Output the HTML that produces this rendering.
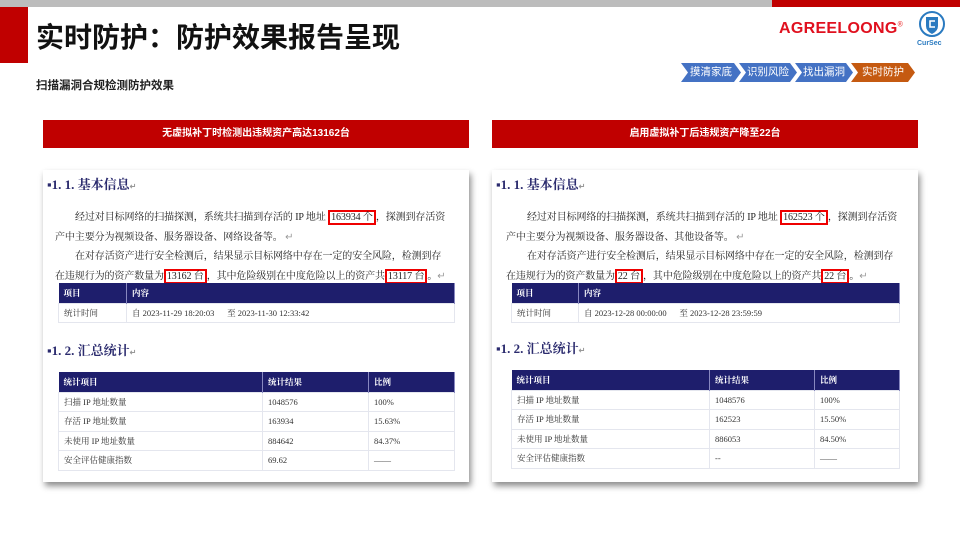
<!DOCTYPE html>
<html><head><meta charset="utf-8"><style>
*{margin:0;padding:0;box-sizing:border-box}
body{width:960px;height:540px;position:relative;overflow:hidden;background:#fff;font-family:"Liberation Sans","Noto Sans CJK SC",sans-serif}
.a{position:absolute;white-space:nowrap}
.panel{position:absolute;top:170px;width:426px;height:312px;background:#fff;box-shadow:2px 4px 6px rgba(0,0,0,.45)}
.h{position:absolute;font-family:"Liberation Serif","Noto Serif CJK SC",serif;font-weight:bold;color:#2b2b6e;font-size:13px}
.p{position:absolute;font-family:"Liberation Serif","Noto Serif CJK SC",serif;font-size:10px;color:#222;white-space:nowrap;letter-spacing:-0.1px}
.box{border:2px solid #e00;padding:0 1px}
table{position:absolute;border-collapse:collapse;font-family:"Liberation Serif","Noto Serif CJK SC",serif;font-size:8.5px;color:#333}
td{border:1px solid #e4e6ee;padding-left:5px;height:19.5px}
th{background:#1e1e6c;color:#fff;text-align:left;padding-left:5px;font-weight:bold;border-right:1px solid #8888c0;height:20px}
.ban{position:absolute;top:120px;height:28px;width:426px;background:#c00000;color:#fff;font-size:10px;font-weight:bold;text-align:center;line-height:28px}
.ar{position:absolute;top:63px;height:19px;color:#fff;font-size:10.5px;line-height:19px;text-align:center;clip-path:polygon(0 0,calc(100% - 7px) 0,100% 50%,calc(100% - 7px) 100%,0 100%,7px 50%)}
</style></head><body>
<div class="a" style="left:0;top:0;width:772px;height:7px;background:#bcbcbc"></div>
<div class="a" style="left:772px;top:0;width:188px;height:7px;background:#c00000"></div>
<div class="a" style="left:0;top:7px;width:28px;height:56px;background:#c00000"></div>
<div class="a" style="left:36px;top:16px;font-size:28px;font-weight:bold;color:#111">实时防护：防护效果报告呈现</div>
<div class="a" style="left:36px;top:77px;font-size:11.5px;font-weight:bold;color:#222">扫描漏洞合规检测防护效果</div>
<div class="a" style="left:779px;top:20px;font-size:16px;font-weight:bold;color:#e0101e;letter-spacing:.3px">AGREELOONG<sup style="font-size:7px;color:#e44">®</sup></div>
<svg class="a" style="left:918px;top:11px" width="28" height="30" viewBox="0 0 28 30"><circle cx="14" cy="13" r="12" fill="none" stroke="#2a7ac0" stroke-width="2"/><path d="M8 6h12v9q0 5-6 8q-6-3-6-8z" fill="#2a7ac0"/><path d="M17 10h-5v6h5" fill="none" stroke="#fff" stroke-width="1.6"/></svg>
<div class="a" style="left:917px;top:40px;font-size:7px;font-weight:bold;color:#2a7ac0">CurSec</div>
<div class="ar" style="left:681px;width:60px;background:#4472c4">摸清家底</div>
<div class="ar" style="left:739px;width:58px;background:#4472c4">识别风险</div>
<div class="ar" style="left:795px;width:58px;background:#4472c4">找出漏洞</div>
<div class="ar" style="left:851px;width:64px;background:#c55a11">实时防护</div>
<div class="ban" style="left:43px">无虚拟补丁时检测出违规资产高达13162台</div>
<div class="ban" style="left:492px">启用虚拟补丁后违规资产降至22台</div>

<div class="panel" style="left:43px"></div>
<div class="h" style="left:47px;top:174px">▪1. 1. 基本信息<span style="font-size:8px;color:#999">↵</span></div>
<div class="p" style="left:75px;top:208px">经过对目标网络的扫描探测，系统共扫描到存活的 IP 地址 <span class="box">163934 个</span>，探测到存活资</div>
<div class="p" style="left:55px;top:228px">产中主要分为视频设备、服务器设备、网络设备等。 <span style="color:#999">↵</span></div>
<div class="p" style="left:75px;top:247px">在对存活资产进行安全检测后，结果显示目标网络中存在一定的安全风险，检测到存</div>
<div class="p" style="left:55px;top:267px">在违规行为的资产数量为<span class="box">13162 台</span>，其中危险级别在中度危险以上的资产共<span class="box">13117 台</span>。<span style="color:#999">↵</span></div>
<table style="left:58px;top:283px;width:397px"><tr><th style="width:68px">项目</th><th>内容</th></tr><tr><td>统计时间</td><td>自 2023-11-29 18:20:03 &nbsp;&nbsp;&nbsp;&nbsp;&nbsp;至 2023-11-30 12:33:42</td></tr></table>
<div class="h" style="left:47px;top:340px">▪1. 2. 汇总统计<span style="font-size:8px;color:#999">↵</span></div>
<table style="left:58px;top:372px;width:397px"><tr><th style="width:204px">统计项目</th><th style="width:106px">统计结果</th><th>比例</th></tr>
<tr><td>扫描 IP 地址数量</td><td>1048576</td><td>100%</td></tr>
<tr><td>存活 IP 地址数量</td><td>163934</td><td>15.63%</td></tr>
<tr><td>未使用 IP 地址数量</td><td>884642</td><td>84.37%</td></tr>
<tr><td>安全评估健康指数</td><td>69.62</td><td>——</td></tr></table>

<div class="panel" style="left:492px"></div>
<div class="h" style="left:496px;top:174px">▪1. 1. 基本信息<span style="font-size:8px;color:#999">↵</span></div>
<div class="p" style="left:527px;top:208px">经过对目标网络的扫描探测，系统共扫描到存活的 IP 地址 <span class="box">162523 个</span>，探测到存活资</div>
<div class="p" style="left:506px;top:228px">产中主要分为视频设备、服务器设备、其他设备等。 <span style="color:#999">↵</span></div>
<div class="p" style="left:527px;top:247px">在对存活资产进行安全检测后，结果显示目标网络中存在一定的安全风险，检测到存</div>
<div class="p" style="left:506px;top:267px">在违规行为的资产数量为<span class="box">22 台</span>，其中危险级别在中度危险以上的资产共<span class="box">22 台</span>。<span style="color:#999">↵</span></div>
<table style="left:511px;top:283px;width:389px"><tr><th style="width:67px">项目</th><th>内容</th></tr><tr><td>统计时间</td><td>自 2023-12-28 00:00:00 &nbsp;&nbsp;&nbsp;&nbsp;&nbsp;至 2023-12-28 23:59:59</td></tr></table>
<div class="h" style="left:496px;top:338px">▪1. 2. 汇总统计<span style="font-size:8px;color:#999">↵</span></div>
<table style="left:511px;top:370px;width:389px"><tr><th style="width:198px">统计项目</th><th style="width:105px">统计结果</th><th>比例</th></tr>
<tr><td>扫描 IP 地址数量</td><td>1048576</td><td>100%</td></tr>
<tr><td>存活 IP 地址数量</td><td>162523</td><td>15.50%</td></tr>
<tr><td>未使用 IP 地址数量</td><td>886053</td><td>84.50%</td></tr>
<tr><td>安全评估健康指数</td><td>--</td><td>——</td></tr></table>
</body></html>
